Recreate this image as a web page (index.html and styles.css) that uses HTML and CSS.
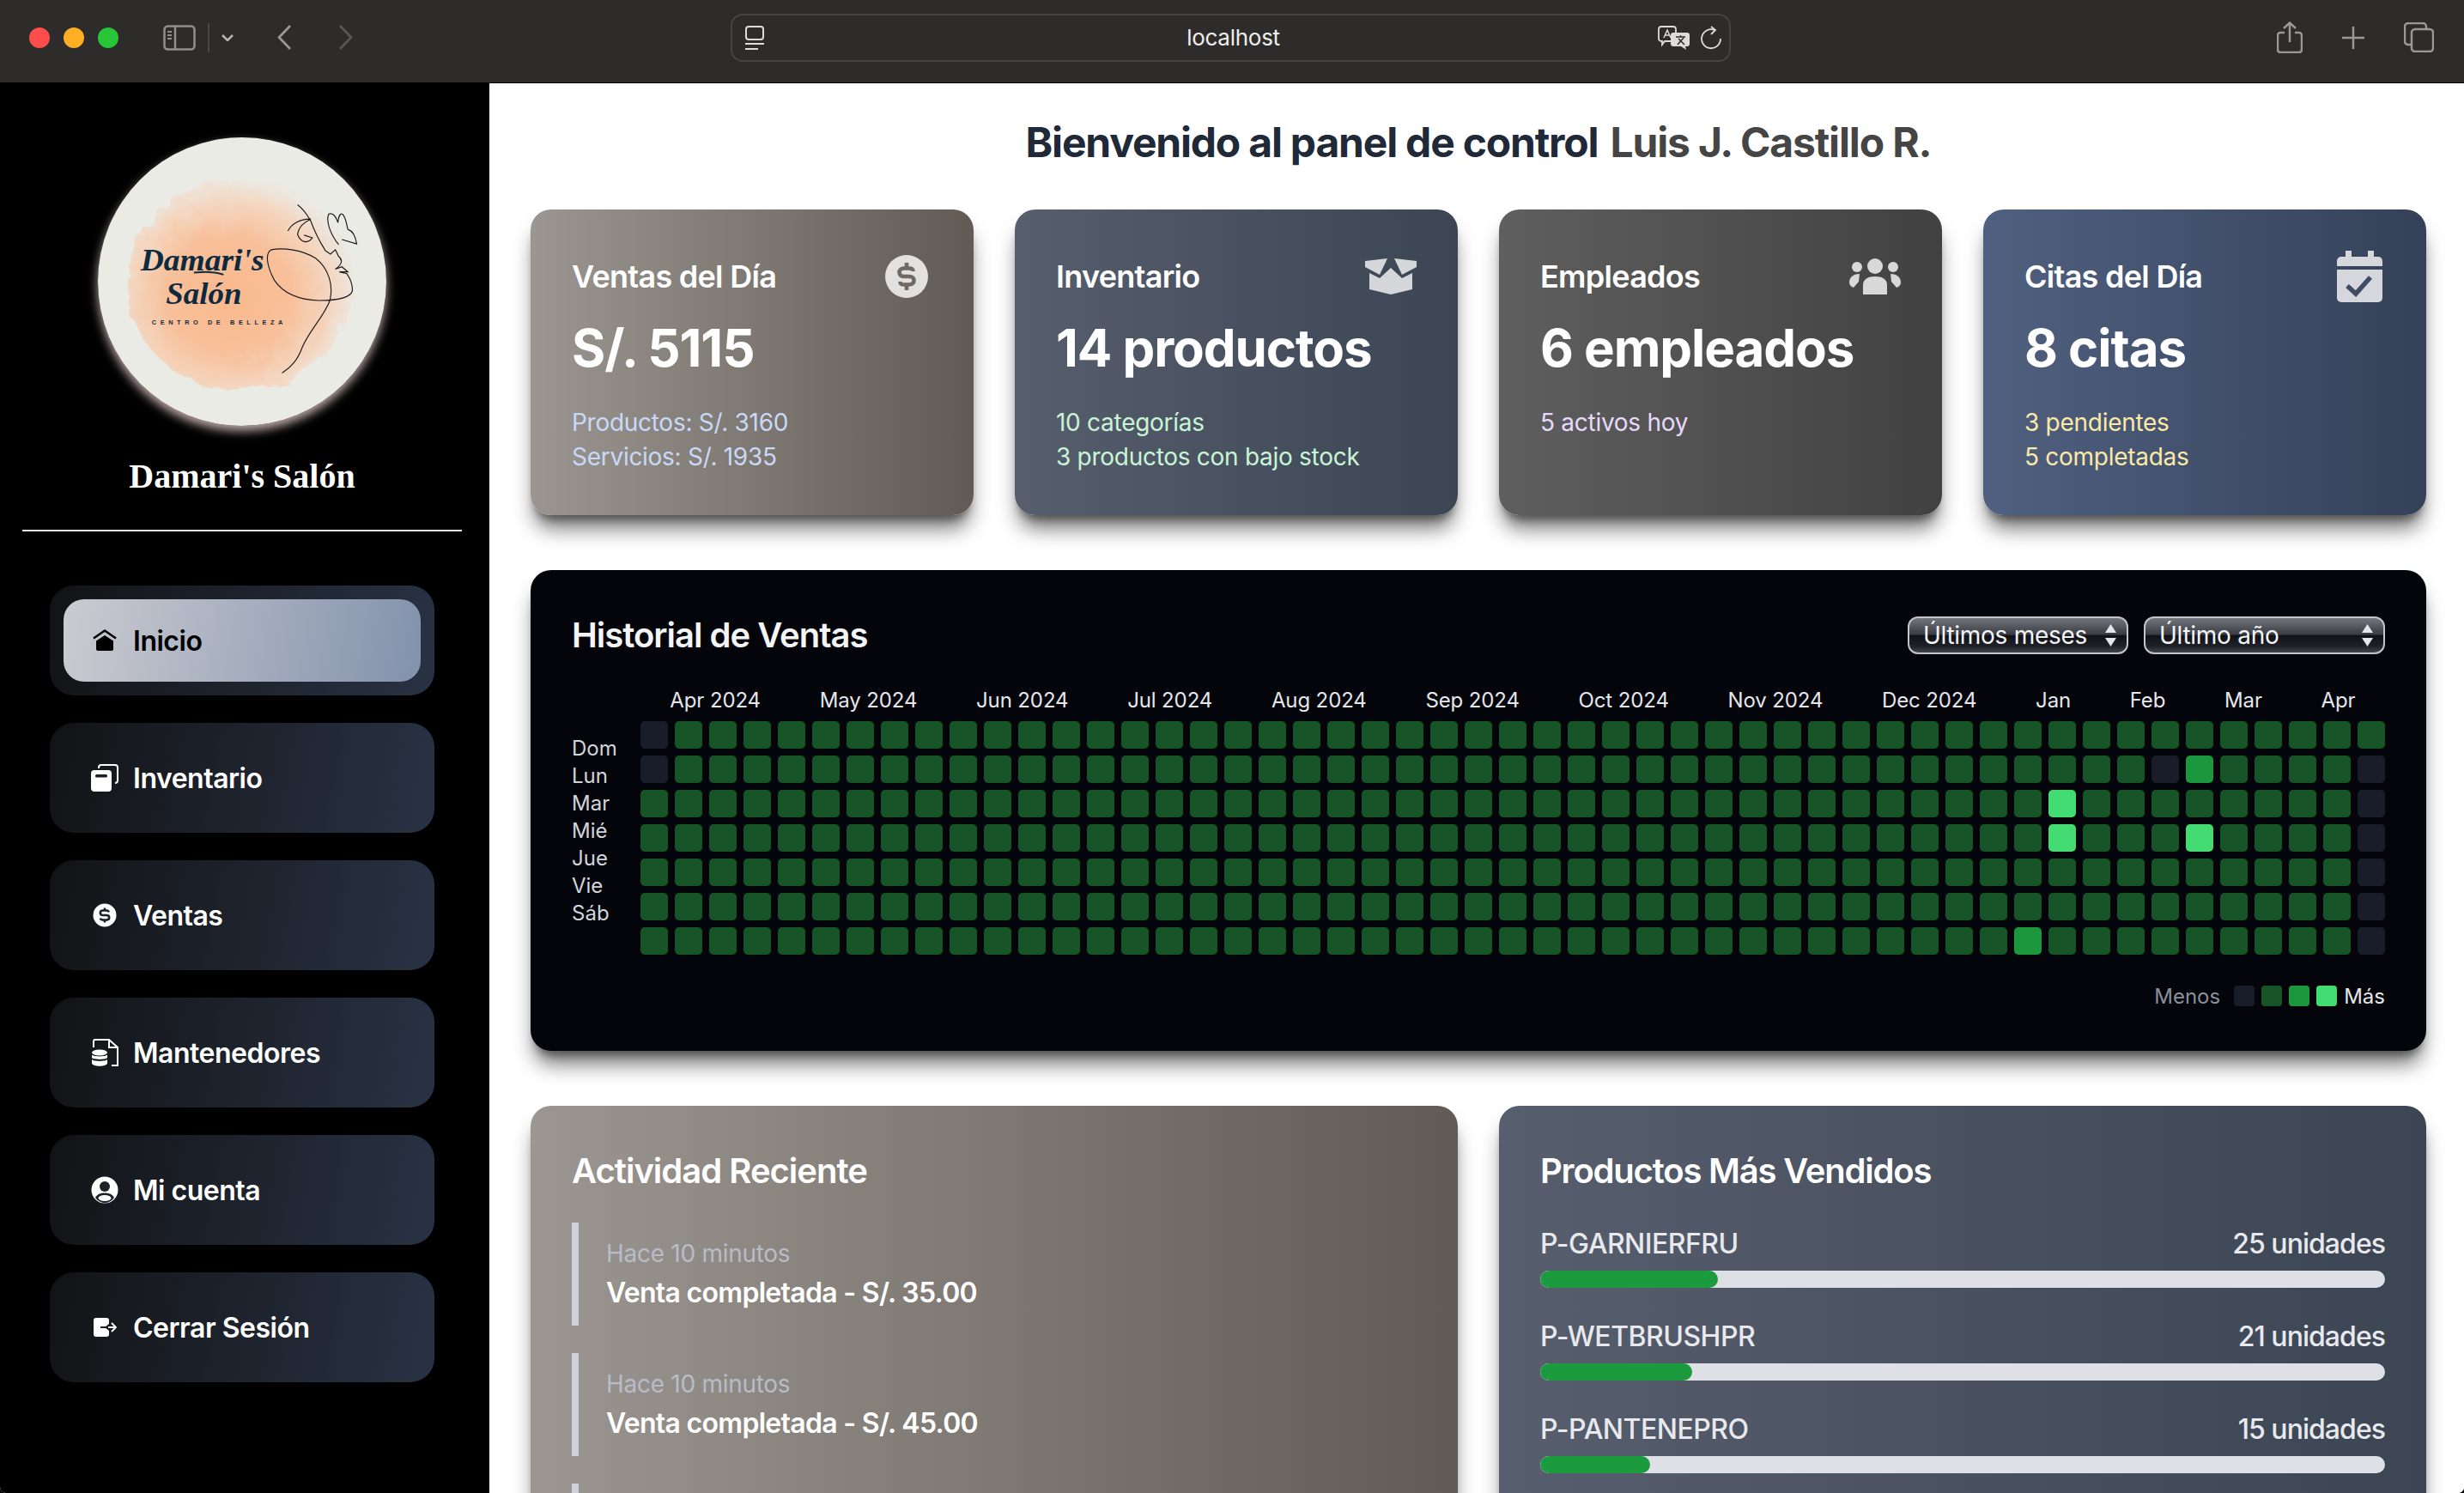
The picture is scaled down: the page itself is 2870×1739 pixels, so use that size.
FILE: index.html
```html
<!DOCTYPE html>
<html lang="es">
<head>
    <meta charset="UTF-8">
    <meta name="viewport" content="width=device-width, initial-scale=1.0">
    <title>Damari's Salón</title>
    <link rel="stylesheet" href="styles.css">
</head>
<body>
<div class="window">
    <header class="toolbar">
        <div class="lights">
            <span class="light light-red"></span>
            <span class="light light-yellow"></span>
            <span class="light light-green"></span>
        </div>
        <svg class="tb-sidebar" width="38" height="30" viewBox="0 0 38 30" fill="none" stroke="#8f8f8d" stroke-width="2.5">
            <rect x="1.5" y="1.5" width="35" height="27" rx="4"/>
            <path d="M14 2V28"/>
            <path d="M5 8H10M5 12H10M5 16H10" stroke-width="2"/>
        </svg>
        <span class="tb-divider"></span>
        <svg class="tb-chevron" width="14" height="8" viewBox="0 0 14 8" fill="none" stroke="#b5b5b3" stroke-width="2.5">
            <path d="M1 1L7 7L13 1"/>
        </svg>
        <svg class="tb-back" width="16" height="29" viewBox="0 0 16 29" fill="none" stroke="#9a9a98" stroke-width="2.6">
            <path d="M15 1L2 14.5L15 28"/>
        </svg>
        <svg class="tb-forward" width="16" height="29" viewBox="0 0 16 29" fill="none" stroke="#585856" stroke-width="2.6">
            <path d="M1 1L14 14.5L1 28"/>
        </svg>
        <div class="address">
            <svg width="22" height="28" viewBox="0 0 22 28" fill="none" stroke="#dcdcda" stroke-width="2">
                <rect x="1" y="1" width="20" height="15" rx="3"/>
                <path d="M0 21H22"/>
                <path d="M0 27H15"/>
            </svg>
            <span class="address-text">localhost</span>
            <svg class="addr-translate" width="38" height="28" viewBox="0 0 38 28" fill="none" stroke="#dcdcda" stroke-width="1.8">
                <path d="M4 1H18a3 3 0 0 1 3 3V15a3 3 0 0 1-3 3H8L5 22V18H4a3 3 0 0 1-3-3V4a3 3 0 0 1 3-3Z"/>
                <path d="M7 14L11 5L15 14M8.5 11H13.5" stroke-width="1.5"/>
                <path d="M18 8H34a3 3 0 0 1 3 3V21a3 3 0 0 1-3 3H32L33 28L27 24H18a3 3 0 0 1-3-3V11a3 3 0 0 1 3-3Z" fill="#dcdcda" stroke="none"/>
                <path d="M21 13H32M26.5 11V13M23 22L30 14M24 15L31 22" stroke="#2d2c2a" stroke-width="1.5"/>
            </svg>
            <svg width="25" height="28" viewBox="0 0 25 28" fill="none" stroke="#dcdcda" stroke-width="1.8">
                <path d="M16 5A11 11 0 1 0 23 15"/>
                <path d="M12 1L17 5L12 10"/>
            </svg>
        </div>
        <div class="tb-right">
            <svg width="30" height="37" viewBox="0 0 30 37" fill="none" stroke="#999997" stroke-width="2.5">
                <path d="M9 13H4a3 3 0 0 0-3 3V33a3 3 0 0 0 3 3H26a3 3 0 0 0 3-3V16a3 3 0 0 0-3-3H21"/>
                <path d="M15 24V2M8 8L15 1.5L22 8"/>
            </svg>
            <svg width="28" height="28" viewBox="0 0 28 28" fill="none" stroke="#999997" stroke-width="2.5">
                <path d="M14 1V27M1 14H27"/>
            </svg>
            <svg width="35" height="35" viewBox="0 0 35 35" fill="none" stroke="#999997" stroke-width="2.5">
                <path d="M8 26H5a4 4 0 0 1-4-4V5a4 4 0 0 1 4-4H22a4 4 0 0 1 4 4V8"/>
                <rect x="9" y="8" width="25" height="26" rx="4"/>
            </svg>
        </div>
    </header>

    <div class="layout">
        <aside class="sidebar">
            <div class="logo">
                <svg class="logo-art" viewBox="298 405 877 847" preserveAspectRatio="none">
                    <defs>
                        <radialGradient id="blob-fill" cx="0.45" cy="0.55" r="0.55">
                            <stop offset="0" stop-color="#f9b88c"/>
                            <stop offset="0.5" stop-color="#f8c09a"/>
                            <stop offset="0.8" stop-color="#f4d6c0"/>
                            <stop offset="1" stop-color="#ece8e1"/>
                        </radialGradient>
                        <filter id="blob-edge" x="-10%" y="-10%" width="120%" height="120%">
                            <feTurbulence type="fractalNoise" baseFrequency="0.018" numOctaves="4" seed="6"/>
                            <feDisplacementMap in="SourceGraphic" scale="45"/>
                        </filter>
                    </defs>
                    <rect x="298" y="405" width="877" height="847" fill="#ebebe6"/>
                    <ellipse cx="733" cy="838" rx="345" ry="310" fill="url(#blob-fill)" filter="url(#blob-edge)"/>
                    <text class="logo-script" x="428" y="795" textLength="375" lengthAdjust="spacingAndGlyphs">Damari's</text>
                    <text class="logo-script" x="505" y="895" textLength="230" lengthAdjust="spacingAndGlyphs">Salón</text>
                    <text class="logo-small" x="462" y="954" textLength="398">CENTRO DE BELLEZA</text>
                    <path d="M590 802C620 800 650 798 680 808" fill="none" stroke="#0e2a3f" stroke-width="5"/>
                    <g fill="none" stroke="#1a1a1c" stroke-width="3">
                        <path d="M858 1097C885 1080 905 1060 920 1020C940 975 985 930 1003 885C1015 840 1000 790 960 760C920 735 860 728 825 735C805 745 812 785 835 825C865 868 915 882 970 884C1010 884 1065 880 1072 855C1072 825 1060 815 1055 805L1032 800L1058 800L1040 785L1020 792C1045 775 1040 762 1030 755L1020 735L1005 748L990 738C975 715 960 690 945 650C930 625 915 610 905 603"/>
                        <path d="M876 680C885 660 910 645 945 645C925 655 910 665 905 690C915 715 935 718 950 700L925 692"/>
                        <path d="M1030 720C1005 690 990 650 1000 630C1015 625 1022 640 1028 655C1030 630 1040 620 1048 640C1055 655 1055 665 1058 675C1075 680 1082 700 1085 718L1040 705"/>
                    </g>
                </svg>
            </div>
            <h2 class="brand">Damari's Salón</h2>
            <hr class="side-line">
            <nav class="nav">
                <div class="nav-item">
                    <a class="nav-link active">
                        <svg class="nav-icon" viewBox="0 0 32 32">
                            <path d="M3 13.5L16 4.5L29 13.5" fill="none" stroke="#000" stroke-width="2.6"/>
                            <path d="M16 10L26 16.5V26a2 2 0 0 1-2 2H8a2 2 0 0 1-2-2V16.5Z" fill="#000"/>
                        </svg>
                        Inicio
                    </a>
                </div>
                <div class="nav-item">
                    <a class="nav-link">
                        <svg class="nav-icon" viewBox="0 0 32 32">
                            <path d="M9 5V4a3 3 0 0 1 3-3H28a3 3 0 0 1 3 3V19a3 3 0 0 1-3 3" fill="none" stroke="#fff" stroke-width="2"/>
                            <rect x="0" y="7" width="24" height="25" rx="4" fill="#fff"/>
                            <rect x="5" y="12" width="14" height="3.5" rx="1.5" fill="#1c2029"/>
                        </svg>
                        Inventario
                    </a>
                </div>
                <div class="nav-item">
                    <a class="nav-link">
                        <svg class="nav-icon" viewBox="0 0 32 32">
                            <circle cx="16" cy="16" r="13.5" fill="#fff"/>
                            <path d="M20.500 12.500C20.500 11 19.500 10.500 18 10.500H14C12 10.500 10.800 11.600 10.800 13.200S12 16 14 16H18C20 16 21.200 17.200 21.200 18.800S20 21.500 18 21.500H14C12.500 21.500 11.200 21 11.200 19.500M16 7.500V10.500M16 21.500V24.500" fill="none" stroke="#1c2029" stroke-width="2.6"/>
                        </svg>
                        Ventas
                    </a>
                </div>
                <div class="nav-item">
                    <a class="nav-link">
                        <svg class="nav-icon" viewBox="0 0 32 32">
                            <path d="M3 10V3a2 2 0 0 1 2-2H21L31 10V31H24" fill="none" stroke="#fff" stroke-width="2"/>
                            <path d="M21 1V10H31" fill="none" stroke="#fff" stroke-width="2"/>
                            <ellipse cx="10" cy="16" rx="9" ry="3.500" fill="#fff"/>
                            <path d="M1 18.500C3 21 17 21 19 18.500V22C17 24.500 3 24.500 1 22ZM1 24C3 26.500 17 26.500 19 24V28C19 33 1 33 1 28Z" fill="#fff"/>
                        </svg>
                        Mantenedores
                    </a>
                </div>
                <div class="nav-item">
                    <a class="nav-link">
                        <svg class="nav-icon" viewBox="0 0 32 32">
                            <circle cx="16" cy="16" r="15.500" fill="#fff"/>
                            <circle cx="16" cy="12" r="6" fill="#1c2029"/>
                            <path d="M5 25C8 20 12 19.500 16 19.500S24 20 27 25C24 29 20 31 16 31S8 29 5 25Z" fill="#1c2029"/>
                            <ellipse cx="16" cy="25.500" rx="7.500" ry="3.500" fill="#fff"/>
                        </svg>
                        Mi cuenta
                    </a>
                </div>
                <div class="nav-item">
                    <a class="nav-link">
                        <svg class="nav-icon" viewBox="0 0 32 32">
                            <path d="M6 5H18a3 3 0 0 1 3 3V12L16 16L21 20V24a3 3 0 0 1-3 3H6a3 3 0 0 1-3-3V8a3 3 0 0 1 3-3Z" fill="#fff"/>
                            <path d="M11 16H21" fill="none" stroke="#1c2029" stroke-width="2"/>
                            <path d="M20 16H29M24 11L29 16L24 21" fill="none" stroke="#fff" stroke-width="1.800"/>
                        </svg>
                        Cerrar Sesión
                    </a>
                </div>
            </nav>
        </aside>

        <main class="main">
            <h1 class="welcome">Bienvenido al panel de control <span class="welcome-name">Luis J. Castillo R.</span></h1>

            <section class="stats">
                <div class="stat-card stone">
                    <div class="stat-head">
                        <span class="stat-title">Ventas del Día</span>
                        <svg class="stat-icon icon-dollar" width="50" height="50" viewBox="0 0 50 50">
                            <circle cx="25" cy="25" r="25" fill="#e2e1df"/>
                            <path d="M32.500 19C32.500 16 31 15.500 28 15.500H22C18.500 15.500 16.500 17.500 16.500 20.300S18.500 25 22 25H28C31.500 25 33.500 27 33.500 29.700S31.500 34.500 28 34.500H22C19 34.500 17.500 34 17.500 31M25 9V15.500M25 34.500V41" fill="none" stroke="#6f6a65" stroke-width="4.600"/>
                        </svg>
                    </div>
                    <div class="stat-value">S/. 5115</div>
                    <div class="stat-sub sub-blue">Productos: S/. 3160<br>Servicios: S/. 1935</div>
                </div>
                <div class="stat-card slate">
                    <div class="stat-head">
                        <span class="stat-title">Inventario</span>
                        <svg class="stat-icon" width="60" height="42" viewBox="0 0 60 42" fill="#d5d6da">
                            <path d="M0 3L26 0L17 19L0 10Z"/>
                            <path d="M60 3L34 0L43 19L60 10Z"/>
                            <path d="M5 17L17 23L30 11L43 23L55 17V36L30 42L5 36Z"/>
                        </svg>
                    </div>
                    <div class="stat-value">14 productos</div>
                    <div class="stat-sub sub-green">10 categorías<br>3 productos con bajo stock</div>
                </div>
                <div class="stat-card graphite">
                    <div class="stat-head">
                        <span class="stat-title">Empleados</span>
                        <svg class="stat-icon" width="60" height="42" viewBox="0 0 60 42" fill="#d8d8d8">
                            <circle cx="30" cy="9" r="9"/>
                            <circle cx="9" cy="10" r="6"/>
                            <circle cx="51" cy="10" r="6"/>
                            <path d="M16 42V31C16 24 22 21 30 21S44 24 44 31V42Z"/>
                            <path d="M12 18C6 18 0 21 0 28C0 31 2 33 5 34L11 27Z"/>
                            <path d="M48 18C54 18 60 21 60 28C60 31 58 33 55 34L49 27Z"/>
                        </svg>
                    </div>
                    <div class="stat-value">6 empleados</div>
                    <div class="stat-sub sub-purple">5 activos hoy</div>
                </div>
                <div class="stat-card navy">
                    <div class="stat-head">
                        <span class="stat-title">Citas del Día</span>
                        <svg class="stat-icon icon-calendar" width="53" height="60" viewBox="0 0 53 60" fill="#d5d7dc">
                            <rect x="10" y="0" width="7" height="10"/>
                            <rect x="36" y="0" width="7" height="10"/>
                            <path d="M5 7H48a5 5 0 0 1 5 5V18H0V12a5 5 0 0 1 5-5Z"/>
                            <path d="M0 22H53V55a5 5 0 0 1-5 5H5a5 5 0 0 1-5-5Z"/>
                            <path d="M12 41L22 50L39 31" fill="none" stroke="#3f4c64" stroke-width="5.500"/>
                        </svg>
                    </div>
                    <div class="stat-value">8 citas</div>
                    <div class="stat-sub sub-yellow">3 pendientes<br>5 completadas</div>
                </div>
            </section>

            <section class="history">
                <div class="history-head">
                    <h3 class="panel-title">Historial de Ventas</h3>
                    <div class="filters">
                        <div class="fake-select months">Últimos meses
                            <svg width="13" height="26" viewBox="0 0 13 26" fill="#e5e6ea"><path d="M6.500 0L13 10H0ZM6.500 26L0 16H13Z"/></svg>
                        </div>
                        <div class="fake-select year">Último año
                            <svg width="13" height="26" viewBox="0 0 13 26" fill="#e5e6ea"><path d="M6.500 0L13 10H0ZM6.500 26L0 16H13Z"/></svg>
                        </div>
                    </div>
                </div>
                <div class="month-row">
                    <span>Apr 2024</span><span>May 2024</span><span>Jun 2024</span><span>Jul 2024</span>
                    <span>Aug 2024</span><span>Sep 2024</span><span>Oct 2024</span><span>Nov 2024</span>
                    <span>Dec 2024</span><span>Jan</span><span>Feb</span><span>Mar</span><span>Apr</span>
                </div>
                <div class="heat">
                    <div class="days">
                        <span>Dom</span><span>Lun</span><span>Mar</span><span>Mié</span><span>Jue</span><span>Vie</span><span>Sáb</span>
                    </div>
                    <div class="heat-grid" id="heat-grid"></div>
                </div>
                <div class="legend">
                    <span class="legend-less">Menos</span>
                    <span class="legend-box lvl0"></span>
                    <span class="legend-box lvl1"></span>
                    <span class="legend-box lvl2"></span>
                    <span class="legend-box lvl3"></span>
                    <span class="legend-more">Más</span>
                </div>
            </section>

            <section class="bottom">
                <div class="panel stone">
                    <h3 class="panel-title">Actividad Reciente</h3>
                    <div class="activity">
                        <div class="activity-time">Hace 10 minutos</div>
                        <div class="activity-text">Venta completada - S/. 35.00</div>
                    </div>
                    <div class="activity">
                        <div class="activity-time">Hace 10 minutos</div>
                        <div class="activity-text">Venta completada - S/. 45.00</div>
                    </div>
                    <div class="activity"></div>
                </div>
                <div class="panel slate">
                    <h3 class="panel-title panel-title-tight">Productos Más Vendidos</h3>
                    <div class="product">
                        <div class="product-row"><span>P-GARNIERFRU</span><span class="units">25 unidades</span></div>
                        <div class="bar"><div class="bar-fill" style="width: 21%"></div></div>
                    </div>
                    <div class="product">
                        <div class="product-row"><span>P-WETBRUSHPR</span><span class="units">21 unidades</span></div>
                        <div class="bar"><div class="bar-fill" style="width: 18%"></div></div>
                    </div>
                    <div class="product">
                        <div class="product-row"><span>P-PANTENEPRO</span><span class="units">15 unidades</span></div>
                        <div class="bar"><div class="bar-fill" style="width: 13%"></div></div>
                    </div>
                </div>
            </section>
        </main>
    </div>
</div>
<script src="script.js"></script>
</body>
</html>
```

FILE: styles.css
```css
* {
    box-sizing: border-box;
}
html, body {
    margin: 0;
    height: 100%;
    background-color: #000;
}
body {
    font-family: Inter, "Liberation Sans", sans-serif;
    overflow: hidden;
}
.window {
    height: 1739px;
    background-color: #fff;
    border-radius: 0 0 7px 7px;
    overflow: hidden;
    display: flex;
    flex-direction: column;
}

/* barra del navegador */
.toolbar {
    height: 97px;
    flex: none;
    display: flex;
    align-items: center;
    padding: 0 35px 9px 34px;
    background-color: #2d2c2a;
    border-bottom: 1px solid #000;
}
.lights {
    display: flex;
    gap: 16px;
    margin-right: 52px;
}
.light {
    width: 24px;
    height: 24px;
    border-radius: 50%;
}
.light-red { background-color: #fe4d4a; }
.light-yellow { background-color: #fdb024; }
.light-green { background-color: #28c636; }
.tb-divider {
    width: 2px;
    height: 34px;
    margin: 0 14px 0 14px;
    background-color: #484745;
}
.tb-back { margin-left: 51px; }
.tb-forward { margin-left: 56px; }
.address {
    width: 1165px;
    height: 56px;
    margin-left: 440px;
    padding: 0 8px 0 15px;
    display: flex;
    align-items: center;
    gap: 12px;
    border: 2px solid #454442;
    border-radius: 14px;
}
.address-text {
    flex: 1;
    text-align: center;
    padding-left: 52px;
    color: #eeeeec;
    font-size: 26px;
    letter-spacing: -0.01em;
}
.tb-right {
    margin-left: auto;
    display: flex;
    align-items: center;
    gap: 45px;
}

.layout {
    flex: 1;
    display: flex;
    min-height: 0;
}

/* menu lateral */
.sidebar {
    width: 570px;
    flex: none;
    background-color: #000;
    padding: 63px 32px 0 26px;
    display: flex;
    flex-direction: column;
    align-items: center;
}
.logo {
    width: 336px;
    height: 336px;
    flex: none;
    border-radius: 50%;
    box-shadow: 0 6px 12px rgba(255, 225, 225, 0.75);
}
.logo-art {
    display: block;
    width: 100%;
    height: 100%;
    border-radius: 50%;
}
.logo-script {
    font-family: "Liberation Serif", serif;
    font-style: italic;
    font-weight: bold;
    font-size: 92px;
    fill: #0e2a3f;
}
.logo-small {
    font-family: "Liberation Sans", sans-serif;
    font-weight: bold;
    font-size: 19px;
    fill: #0e2a3f;
}
.brand {
    margin: 35px 0 0;
    color: #fff;
    font-family: "Liberation Serif", serif;
    font-size: 40px;
    line-height: 48px;
    font-weight: bold;
}
.side-line {
    width: 100%;
    height: 2px;
    margin: 38px 0 0;
    border: none;
    background-color: #e5e7eb;
}
.nav {
    width: 448px;
    margin-top: 63px;
    display: flex;
    flex-direction: column;
    gap: 32px;
}
.nav-item {
    height: 128px;
    border-radius: 28px;
    background: linear-gradient(100deg, #121315, #293244);
}
.nav-link {
    height: 100%;
    display: flex;
    align-items: center;
    gap: 17px;
    padding-left: 48px;
    color: #fff;
    font-size: 32px;
    font-weight: 600;
    letter-spacing: -0.015em;
}
.nav-link.active {
    height: 96px;
    margin: 16px;
    padding-left: 32px;
    color: #000;
    border-radius: 24px;
    background: linear-gradient(100deg, #cbcbd1, #8292ac);
}
.nav-item:first-child {
    padding: 0.1px 0;
}
.nav-icon {
    width: 32px;
    height: 32px;
    flex: none;
}

/* contenido */
.main {
    flex: 1;
    min-width: 0;
    padding: 45px 44px 0 48px;
    background-color: #fff;
}
.welcome {
    margin: 0;
    text-align: center;
    font-size: 48px;
    line-height: 48px;
    font-weight: 700;
    color: #1f2937;
    letter-spacing: -0.025em;
}
.welcome-name {
    margin-left: 4px;
    font-weight: 700;
    color: #454545;
    letter-spacing: -0.024em;
}
.stats {
    margin-top: 54px;
    display: grid;
    grid-template-columns: repeat(4, 1fr);
    gap: 48px;
}
.stat-card {
    height: 356px;
    padding: 48px;
    border-radius: 24px;
    box-shadow: 0 20px 25px -5px rgba(0, 0, 0, 0.55), 0 10px 10px -5px rgba(0, 0, 0, 0.35);
    color: #fff;
}
.stone { background: linear-gradient(to right, #9b9691, #625a54); }
.slate { background: linear-gradient(to right, #575e6e, #3b4554); }
.graphite { background: linear-gradient(to right, #5f5f5f, #414141); }
.navy { background: linear-gradient(to right, #506080, #344158); }
.stat-head {
    height: 60px;
    display: flex;
    align-items: center;
    justify-content: space-between;
}
.stat-title {
    font-size: 36px;
    font-weight: 600;
    letter-spacing: -0.02em;
}
.icon-dollar { margin-right: 5px; }
.icon-calendar { margin-right: 3px; }
.stat-value {
    margin-top: 23px;
    font-size: 60px;
    line-height: 60px;
    font-weight: 700;
    letter-spacing: -0.018em;
}
.stat-sub {
    margin-top: 37px;
    font-size: 28px;
    line-height: 40px;
    letter-spacing: -0.01em;
}
.sub-blue { color: #c8d9f7; }
.sub-green { color: #c8f5d5; }
.sub-purple { color: #e7d9fb; }
.sub-yellow { color: #fbe9a8; }

/* historial */
.history {
    margin-top: 64px;
    height: 560px;
    padding: 48px;
    border-radius: 24px;
    background-color: #03050a;
    box-shadow: 0 20px 25px -5px rgba(0, 0, 0, 0.55), 0 10px 10px -5px rgba(0, 0, 0, 0.35);
    color: #fff;
}
.history-head {
    height: 56px;
    display: flex;
    align-items: center;
    justify-content: space-between;
}
.panel-title {
    margin: 0;
    font-size: 40px;
    line-height: 56px;
    font-weight: 600;
    letter-spacing: -0.025em;
}
.history .panel-title { color: #f3f4f6; }
.filters {
    display: flex;
    gap: 18px;
}
.fake-select {
    height: 44px;
    padding: 0 12px 0 16px;
    display: flex;
    align-items: center;
    justify-content: space-between;
    border: 2px solid #c3c5cc;
    border-radius: 12px;
    background: linear-gradient(#74767d, #393b43 48%, #101218 50%, #1f2127 82%, #43454c);
    color: #f3f4f6;
    font-size: 28px;
    letter-spacing: -0.01em;
}
.fake-select.months { width: 257px; }
.fake-select.year { width: 281px; }
.month-row {
    margin: 31px 0 9px 80px;
    height: 32px;
    display: flex;
    justify-content: space-around;
    align-items: center;
    color: #e5e7eb;
    font-size: 24px;
    letter-spacing: -0.005em;
}
.heat {
    display: flex;
}
.days {
    width: 80px;
    padding-top: 16px;
    display: flex;
    flex-direction: column;
    color: #d1d5db;
    font-size: 24px;
    line-height: 32px;
}
.heat-grid {
    display: grid;
    grid-template-rows: repeat(7, 32px);
    grid-auto-columns: 32px;
    grid-auto-flow: column;
    gap: 8px;
}
.cell {
    border-radius: 5px;
}
.lvl0 { background-color: #181d29; }
.lvl1 { background-color: #175528; }
.lvl2 { background-color: #1b973e; }
.lvl3 { background-color: #42dc72; }
.legend {
    margin-top: 32px;
    height: 32px;
    display: flex;
    align-items: center;
    justify-content: flex-end;
    gap: 8px;
    font-size: 24px;
}
.legend-box {
    width: 24px;
    height: 24px;
    border-radius: 4px;
}
.legend-less {
    margin-right: 8px;
    color: #8b909c;
}
.legend-more { color: #e5e7eb; }

/* paneles inferiores */
.bottom {
    margin-top: 64px;
    display: grid;
    grid-template-columns: 1fr 1fr;
    gap: 48px;
}
.panel {
    height: 700px;
    padding: 48px;
    border-radius: 24px;
    box-shadow: 0 20px 25px -5px rgba(0, 0, 0, 0.55), 0 10px 10px -5px rgba(0, 0, 0, 0.35);
    color: #fff;
}
.panel .panel-title {
    margin-bottom: 32px;
}
.panel .panel-title-tight {
    margin-bottom: 28px;
    letter-spacing: -0.03em;
}
.activity {
    height: 120px;
    margin-bottom: 32px;
    padding: 16px 0 0 32px;
    border-left: 8px solid #cdd1da;
}
.activity-time {
    font-size: 28px;
    line-height: 40px;
    color: #b7bcc8;
    letter-spacing: -0.01em;
}
.activity-text {
    margin-top: 4px;
    font-size: 32px;
    line-height: 44px;
    font-weight: 600;
    letter-spacing: -0.022em;
}
.product {
    height: 108px;
}
.product-row {
    height: 56px;
    margin-bottom: 4px;
    display: flex;
    align-items: center;
    justify-content: space-between;
    color: #e8e9ed;
    font-size: 32px;
    font-weight: 500;
    letter-spacing: -0.016em;
}
.units {
    letter-spacing: -0.03em;
}
.bar {
    height: 20px;
    border-radius: 10px;
    background-color: #dfe0e5;
    overflow: hidden;
}
.bar-fill {
    height: 100%;
    border-radius: 10px;
    background-color: #1c9a3e;
}
```

FILE: script.js
```js
// Genera las celdas del historial (51 semanas x 7 dias)
var grid = document.getElementById('heat-grid');
var special = {
    '0-0': 0, '0-1': 0,
    '44-1': 0,
    '50-1': 0, '50-2': 0, '50-3': 0, '50-4': 0, '50-5': 0, '50-6': 0,
    '45-1': 2, '40-6': 2,
    '41-2': 3, '41-3': 3, '45-3': 3
};
for (var col = 0; col < 51; col++) {
    for (var row = 0; row < 7; row++) {
        var key = col + '-' + row;
        var cell = document.createElement('div');
        var level = key in special ? special[key] : 1;
        cell.className = 'cell lvl' + level;
        grid.appendChild(cell);
    }
}
```
